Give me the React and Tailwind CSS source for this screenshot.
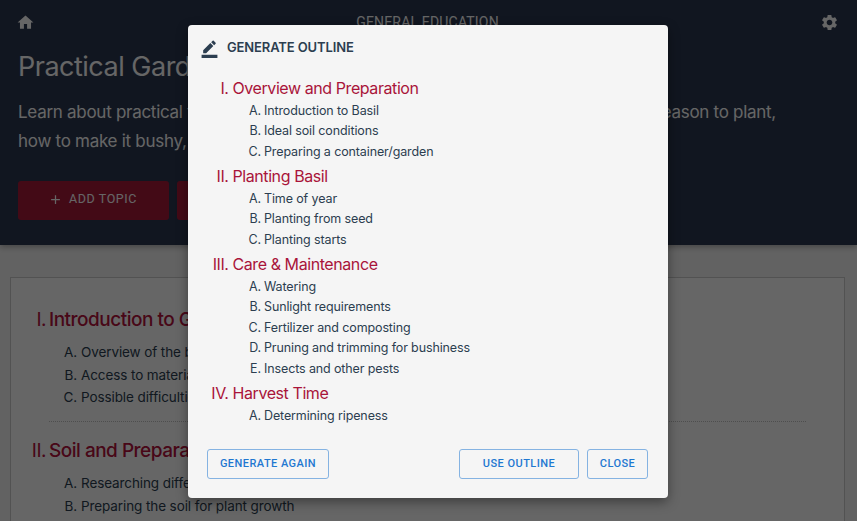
import { MdHome, MdSettings, MdBorderColor, MdAdd } from "react-icons/md";

const topics = [
  {
    numeral: "I.",
    title: "Introduction to Gardening",
    items: ["Overview of the basics", "Access to materials", "Possible difficulties"],
  },
  {
    numeral: "II.",
    title: "Soil and Preparation",
    items: ["Researching different soils", "Preparing the soil for plant growth"],
  },
];

const outline = [
  {
    numeral: "I.",
    title: "Overview and Preparation",
    items: ["Introduction to Basil", "Ideal soil conditions", "Preparing a container/garden"],
  },
  {
    numeral: "II.",
    title: "Planting Basil",
    items: ["Time of year", "Planting from seed", "Planting starts"],
  },
  {
    numeral: "III.",
    title: "Care & Maintenance",
    items: [
      "Watering",
      "Sunlight requirements",
      "Fertilizer and composting",
      "Pruning and trimming for bushiness",
      "Insects and other pests",
    ],
  },
  { numeral: "IV.", title: "Harvest Time", items: ["Determining ripeness"] },
];

const letters = "ABCDE";

function Header() {
  return (
    <header className="h-[245px] bg-[#2b3750] px-[18px] pt-[12px] text-white shadow-[0_2px_6px_rgba(0,0,0,0.3)]">
      <div className="flex h-5 items-center justify-between">
        <MdHome className="-ml-[2px] size-[19px]" />
        <span className="font-['Roboto',sans-serif] text-[14px] leading-5 tracking-[0.18px]">GENERAL EDUCATION</span>
        <MdSettings className="size-[19px]" />
      </div>
      <h1 className="mt-[15px] h-10 text-[27px] leading-10 tracking-[-0.5px] whitespace-nowrap">Practical Gardening</h1>
      <div className="mt-[11px] text-[17px] leading-[29px] tracking-[-0.28px] whitespace-nowrap">
        <div className="flex justify-between pr-[63px]">
          <span>Learn about practical tips</span>
          <span>season to plant,</span>
        </div>
        <div>how to make it bushy,</div>
      </div>
      <div className="mt-[25px] flex gap-2 font-['Roboto',sans-serif] text-[12.5px] tracking-[0.6px]">
        <button className="flex h-[39px] w-[151px] items-center justify-center gap-[6px] rounded-[3px] bg-[#a81a39] pr-[2px] pb-[2px]">
          <MdAdd className="size-[15px]" />
          ADD TOPIC
        </button>
        <button className="h-[39px] w-[151px] rounded-[3px] bg-[#a81a39]" />
      </div>
    </header>
  );
}

function Topic({ topic }) {
  return (
    <section className="mr-[38px] ml-[38px] h-[131px]">
      <h2 className="-ml-[38px] flex h-[30px] gap-[3px] text-[19px] leading-[30px] font-medium tracking-[-0.5px] whitespace-nowrap text-[#b5123c]">
        <span className="w-[35px] text-right font-normal">{topic.numeral}</span>
        {topic.title}
      </h2>
      <ol className="mt-[6px] text-[13.5px] leading-[22.7px] tracking-[-0.1px] text-[#2c3e50]">
        {topic.items.map((item, i) => (
          <li key={item} className="flex gap-1">
            <span className="w-7 text-right">{letters[i]}.</span>
            {item}
          </li>
        ))}
      </ol>
      <div className="mt-[12px] border-t border-dotted border-[#c4c4c4]" />
    </section>
  );
}

function OutlineSection({ section }) {
  return (
    <section>
      <h3 className="flex h-[26px] gap-1 text-[16px] leading-[27px] tracking-[-0.42px] text-[#a9143a]">
        <span className="w-[40.5px] text-right">{section.numeral}</span>
        {section.title}
      </h3>
      <ol className="pb-[0.5px] text-[12.5px] leading-[20.5px] tracking-[-0.12px] text-[#2c3e50]">
        {section.items.map((item, i) => (
          <li key={item} className="flex gap-[3px]">
            <span className="w-[73px] text-right">{letters[i]}.</span>
            {item}
          </li>
        ))}
      </ol>
    </section>
  );
}

function OutlineButton({ className, children }) {
  return (
    <button
      className={`h-[30px] rounded-[3px] border border-[#85b3e2] font-['Roboto',sans-serif] text-[11px] font-medium tracking-[0.45px] text-[#1f78d1] ${className}`}
    >
      {children}
    </button>
  );
}

export default function App() {
  return (
    <div className="relative h-[521px] w-[857px] overflow-hidden bg-[#f5f5f5] font-['Inter',sans-serif]">
      <Header />
      <main className="mx-[10px] mt-8 h-[300px] w-[835px] border border-[#ccc] bg-white pt-[27px]">
        {topics.map((topic) => (
          <Topic key={topic.numeral} topic={topic} />
        ))}
      </main>

      <div className="absolute inset-0 flex items-start bg-black/60 pt-[25px] pl-[188px]">
        <div
          role="dialog"
          className="flex h-[473px] w-[480px] flex-col rounded-[4px] bg-[#f5f5f5] shadow-[0_4px_12px_rgba(0,0,0,0.4)]"
        >
          <div className="mb-[5.8px] flex h-[44px] items-center gap-[8px] pl-[12px] text-[#2c3e50]">
            <MdBorderColor className="mt-[2px] size-[19px]" />
            <h2 className="text-[13px] leading-5 font-semibold tracking-[-0.13px]">GENERATE OUTLINE</h2>
          </div>
          <div className="flex-1">
            {outline.map((section) => (
              <OutlineSection key={section.numeral} section={section} />
            ))}
          </div>
          <div className="mb-[19px] flex gap-2 pr-5 pl-[19px]">
            <OutlineButton className="mr-auto w-[122px]">GENERATE AGAIN</OutlineButton>
            <OutlineButton className="w-[120px]">USE OUTLINE</OutlineButton>
            <OutlineButton className="w-[61px]">CLOSE</OutlineButton>
          </div>
        </div>
      </div>
    </div>
  );
}
